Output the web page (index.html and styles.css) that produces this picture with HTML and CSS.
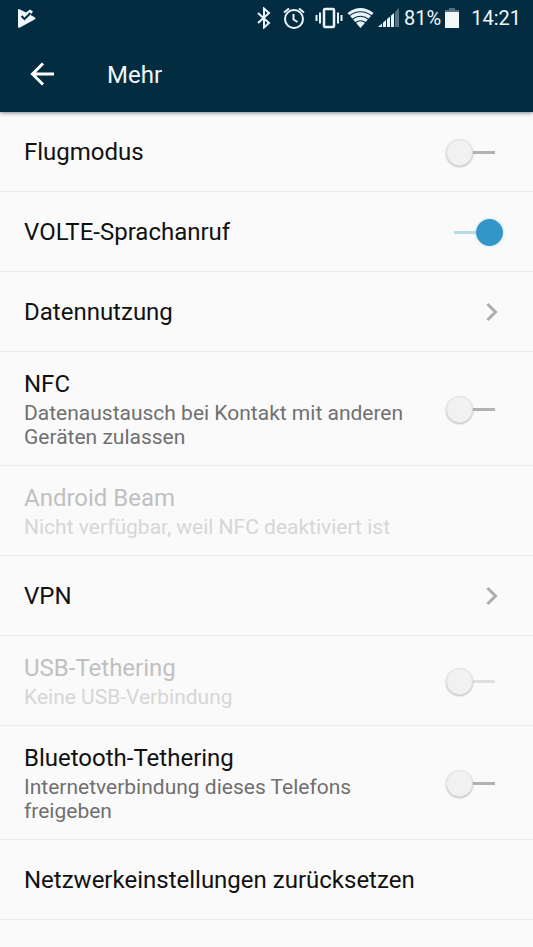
FILE: index.html
```html
<!DOCTYPE html>
<html lang="de">
<head>
<meta charset="utf-8">
<meta name="viewport" content="width=device-width, initial-scale=1">
<title>Mehr</title>
<link rel="stylesheet" href="styles.css">
</head>
<body>
<header class="top">
  <div class="status">
    <svg class="notice" width="20" height="22" viewBox="0 0 20 22" aria-hidden="true"><path d="M2 3Q2 1.500 3.500 2.200L10 5.500L14 2.500L17 4.500L14.500 8L19 10.500Q20 11.500 19 12.300L4 20.500Q2 21.500 2 19.500Z" fill="#eff8fd"/><path d="M5.500 9L8.500 12L14.500 6" fill="none" stroke="#042c41" stroke-width="2"/></svg>
    <div class="indicators">
      <svg width="14" height="22" viewBox="0 0 14 22" aria-hidden="true"><path d="M1 6L12 16L7 20.500V1.500L12 6L1 16" fill="none" stroke="#e8f5fc" stroke-width="2"/></svg>
      <svg class="alarm" width="22" height="22" viewBox="0 0 22 22" fill="none" stroke="#e8f5fc" stroke-width="2" aria-hidden="true"><circle cx="11" cy="12" r="9"/><path d="M10.500 7V12.500L14.500 15M1 5.500L6 1.500M16 1.500L21 5.500"/></svg>
      <svg class="vibrate" width="28" height="22" viewBox="0 0 28 22" fill="none" stroke="#e8f5fc" aria-hidden="true"><rect x="9" y="2" width="10" height="18" rx="1" stroke-width="2.500"/><path d="M5 5.500V16.500M23 5.500V16.500M1.500 8V14M26.500 8V14" stroke-width="2"/></svg>
      <svg class="wifi" width="27" height="22" viewBox="0 0 27 22" aria-hidden="true"><path d="M.5 6Q13.500 -4 26.500 6L13.500 21Z" fill="#e8f5fc"/><path d="M2 9Q13.500 .5 25 9M5 12.500Q13.500 6 22 12.500M8 16Q13.500 11.500 19 16" fill="none" stroke="#042c41" stroke-width="1.200"/></svg>
      <svg class="signal" width="21" height="22" viewBox="0 0 21 22" aria-hidden="true"><path d="M0 20L16 6V20Z" fill="#e8f5fc"/><path d="M17 5L21 1V20H17Z" fill="#57727f"/><path d="M4.500 12V21M8.500 8V21M12.500 5V21M16.500 3V21" stroke="#042c41" stroke-width="1"/></svg>
      <span class="percent">81%</span>
      <svg class="battery" width="14" height="22" viewBox="0 0 14 22" aria-hidden="true"><path d="M4 1H10V3H14V6H0V3H4Z" fill="#57727f"/><path d="M0 5H14V21H0Z" fill="#f2f7f9"/></svg>
      <time class="clock">14:21</time>
    </div>
  </div>
  <div class="toolbar">
    <button class="back" type="button" aria-label="Zurück"><svg width="24" height="24" viewBox="0 0 24 24" aria-hidden="true"><path d="M24 12H3M13 1.500L2.500 12L13 22.500" fill="none" stroke="#fff" stroke-width="3"/></svg></button>
    <h1>Mehr</h1>
  </div>
</header>
<main>
  <label class="row"><span class="text"><span class="title">Flugmodus</span></span><input class="switch" type="checkbox"></label>
  <label class="row"><span class="text"><span class="title">VOLTE-Sprachanruf</span></span><input class="switch" type="checkbox" checked></label>
  <a class="row" href="#data"><span class="text"><span class="title">Datennutzung</span></span><svg class="chevron" width="12" height="20" viewBox="0 0 12 20" aria-hidden="true"><path d="M1.500 2L9.500 10L1.500 18"/></svg></a>
  <label class="row"><span class="text"><span class="title">NFC</span><span class="detail">Datenaustausch bei Kontakt mit anderen Geräten zulassen</span></span><input class="switch" type="checkbox"></label>
  <div class="row disabled"><span class="text"><span class="title">Android Beam</span><span class="detail">Nicht verfügbar, weil NFC deaktiviert ist</span></span></div>
  <a class="row" href="#vpn"><span class="text"><span class="title">VPN</span></span><svg class="chevron" width="12" height="20" viewBox="0 0 12 20" aria-hidden="true"><path d="M1.500 2L9.500 10L1.500 18"/></svg></a>
  <label class="row disabled"><span class="text"><span class="title">USB-Tethering</span><span class="detail">Keine USB-Verbindung</span></span><input class="switch" type="checkbox" disabled></label>
  <label class="row"><span class="text"><span class="title">Bluetooth-Tethering</span><span class="detail">Internetverbindung dieses Telefons freigeben</span></span><input class="switch" type="checkbox"></label>
  <a class="row" href="#reset"><span class="text"><span class="title">Netzwerkeinstellungen zurücksetzen</span></span></a>
</main>
</body>
</html>
```
FILE: styles.css
```css
* {
  box-sizing: border-box;
}

body {
  margin: 0;
  background: #fafafa;
  color: #111;
  font-family: Roboto, "Noto Sans", sans-serif;
}

.top {
  position: relative;
  background: #042c41;
  color: #eff8fd;
  box-shadow: 0 1px 4px rgba(0, 20, 50, 0.5);
}

.status {
  display: flex;
  align-items: center;
  justify-content: space-between;
  height: 36px;
  padding: 0 12px 0 16px;
}

.indicators {
  display: flex;
  align-items: center;
  font-size: 20px;
  line-height: 38px;
}

.alarm {
  margin-left: 12px;
}

.vibrate {
  margin-left: 10px;
}

.wifi,
.signal {
  margin-left: 4px;
}

.percent {
  margin-left: 5px;
}

.battery {
  margin-left: 4px;
}

.clock {
  margin-left: 12px;
}

.toolbar {
  display: flex;
  align-items: center;
  height: 76px;
  padding-left: 20px;
}

.back {
  display: grid;
  place-items: center;
  width: 44px;
  height: 44px;
  padding: 0;
  border: 0;
  background: none;
}

h1 {
  margin: 0 0 0 43px;
  padding-top: 2px;
  font-size: 24px;
  font-weight: 400;
  line-height: 32px;
}

.row {
  display: flex;
  align-items: center;
  justify-content: space-between;
  gap: 20px;
  min-height: 80px;
  padding: 17px 30px 16px 24px;
  border-bottom: 1px solid #ececec;
  color: inherit;
  text-decoration: none;
}

.text {
  flex: 1;
}

.title,
.detail {
  display: block;
}

.title {
  font-size: 24px;
  line-height: 30px;
}

.detail {
  margin-top: 2px;
  color: #707070;
  font-size: 21px;
  line-height: 24px;
}

.disabled .title {
  color: #c0c0c0;
}

.disabled .detail {
  color: #d6d6d6;
}

.switch {
  flex: none;
  display: flex;
  align-items: center;
  width: 57px;
  height: 27px;
  margin: 0;
  appearance: none;
  background: linear-gradient(#b2b2b2, #b2b2b2) center / 41px 3px no-repeat;
}

.switch::before {
  content: "";
  box-sizing: border-box;
  width: 27px;
  height: 27px;
  border: 1px solid #e2e2e2;
  border-radius: 50%;
  background: #f1f1f1;
  box-shadow: 0 1px 2px rgba(0, 0, 0, 0.25);
}

.switch:checked {
  justify-content: flex-end;
  background-image: linear-gradient(#b9d9e3, #b9d9e3);
}

.switch:checked::before {
  border-color: #3590c0;
  background: #3396c8;
  box-shadow: 0 0 3px #a5dcf2;
}

.switch:disabled {
  background-image: linear-gradient(#e0e0e0, #e0e0e0);
}

.chevron {
  flex: none;
  margin-right: 5px;
  fill: none;
  stroke: #adadad;
  stroke-width: 3;
}
```
